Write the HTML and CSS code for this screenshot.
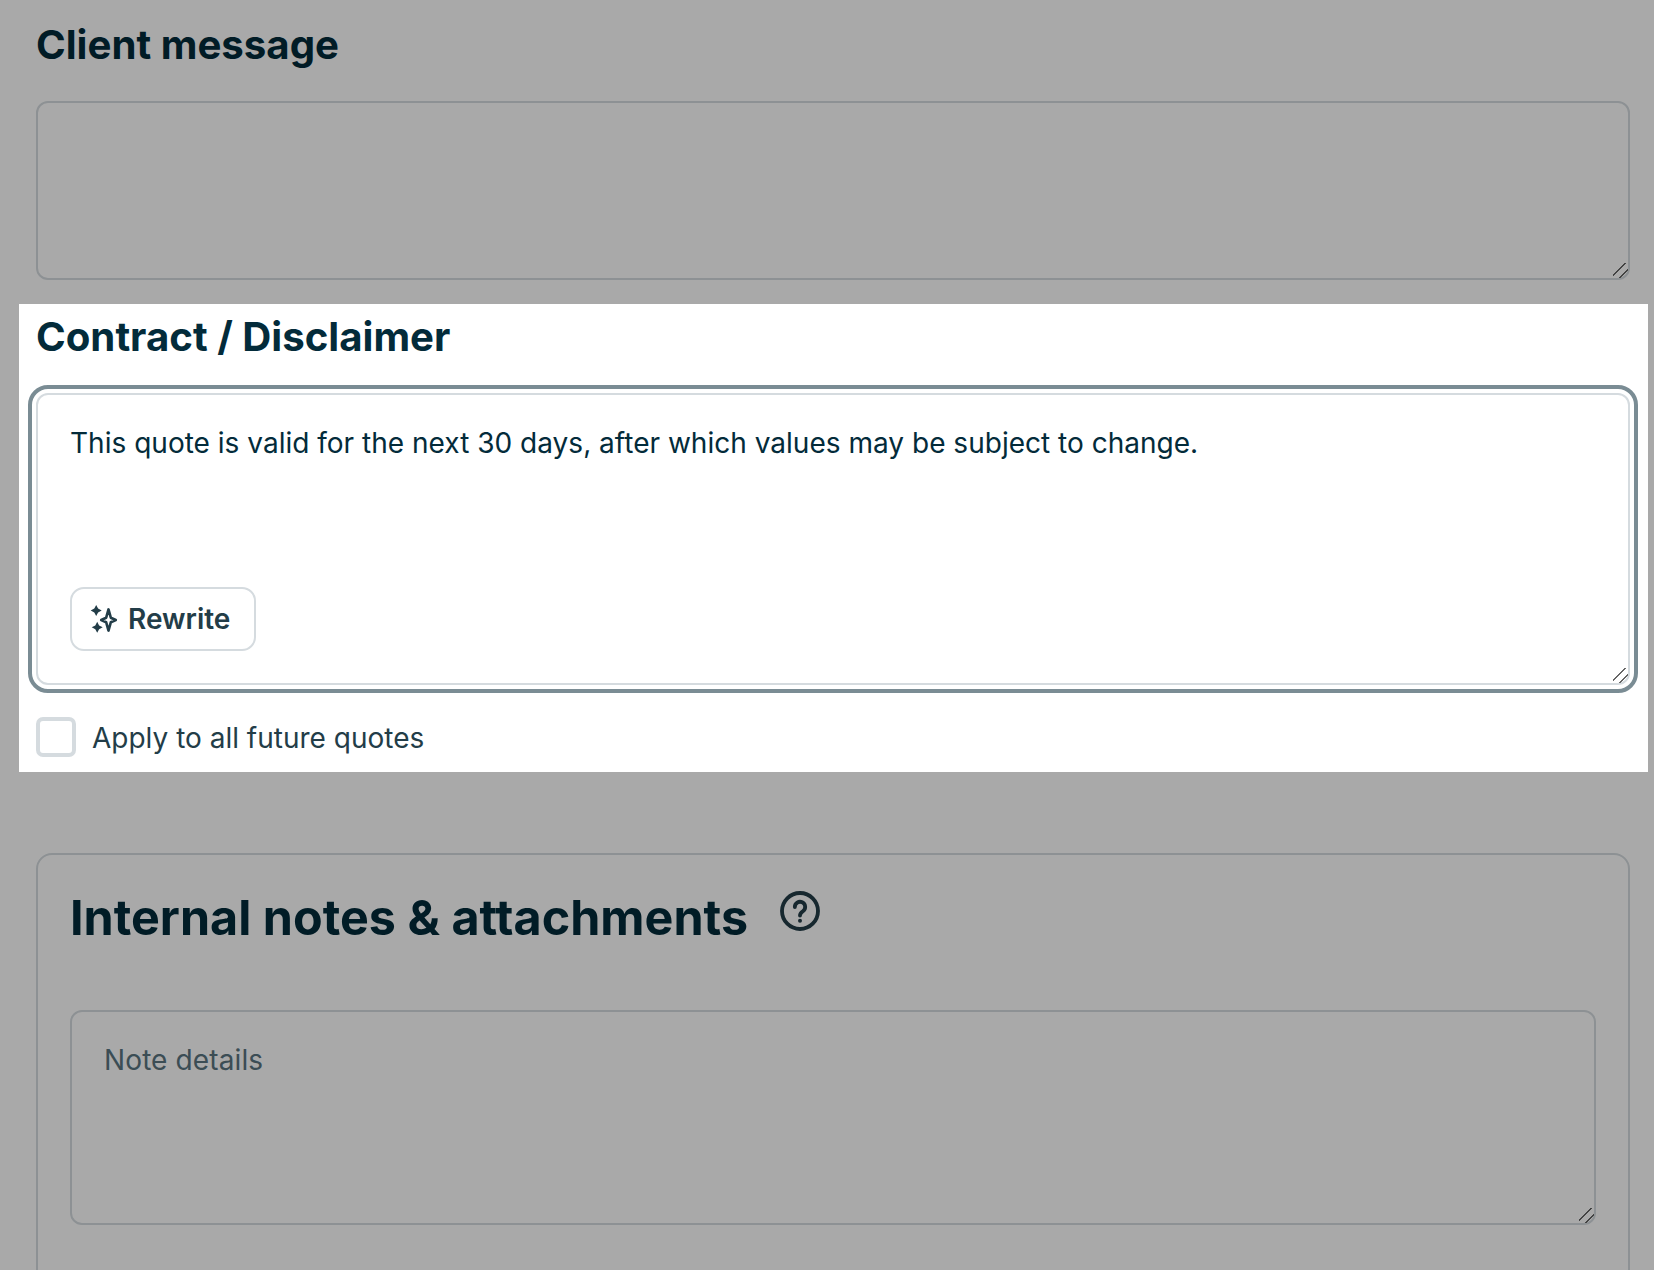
FILE: index.html
```html
<!DOCTYPE html>
<html lang="en">
<head>
    <meta charset="UTF-8">
    <meta name="viewport" content="width=device-width, initial-scale=1.0">
    <title>Quote details</title>
    <link rel="stylesheet" href="styles.css">
</head>
<body>

    <div class="overlay"></div>

    <div class="page">
        <section class="field-section">
            <h2 class="section-title">Client message</h2>
            <textarea class="text-box client-box" aria-label="Client message"></textarea>
        </section>

        <section class="field-section highlighted">
            <h2 class="section-title">Contract / Disclaimer</h2>
            <div class="contract-field">
                <textarea class="text-box contract-box" aria-label="Contract / Disclaimer">This quote is valid for the next 30 days, after which values may be subject to change.</textarea>
                <button class="rewrite-btn" type="button">
                    <svg class="rewrite-icon" viewBox="0 0 28 28" aria-hidden="true">
                        <path class="star-outline" d="M18.5 4.4 L20.8 12.7 L25.8 15 L20.8 17.3 L18.5 25.6 L16.2 17.3 L11.2 15 L16.2 12.7 Z"/>
                        <path class="star-solid" d="M6.2 0 L8.1 3.6 L11.7 5.5 L8.1 7.4 L6.2 11 L4.3 7.4 L.7 5.5 L4.3 3.6 Z"/>
                        <path class="star-solid" d="M7.2 16.8 L9.1 20.4 L12.7 22.3 L9.1 24.2 L7.2 27.8 L5.3 24.2 L1.7 22.3 L5.3 20.4 Z"/>
                    </svg>
                    Rewrite
                </button>
            </div>
            <label class="apply-row">
                <input class="apply-check" type="checkbox">
                <span class="apply-label">Apply to all future quotes</span>
            </label>
        </section>

        <section class="notes-card">
            <div class="notes-header">
                <h1 class="notes-title">Internal notes &amp; attachments</h1>
                <svg class="help-icon" viewBox="0 0 24 24" aria-hidden="true">
                    <circle cx="12" cy="12" r="10.8"/>
                    <path d="M8.9 9.6a3.1 3.1 0 1 1 5 2.4c-1.1.8-1.9 1.3-1.9 2.7"/>
                    <circle class="help-dot" cx="12" cy="17.9" r="1.2"/>
                </svg>
            </div>
            <textarea class="text-box notes-box" placeholder="Note details" aria-label="Note details"></textarea>
        </section>
    </div>

</body>
</html>
```

FILE: styles.css
```css
* {
    box-sizing: border-box;
}

html,
body {
    height: 1270px;
    margin: 0;
    overflow: hidden;
}

body {
    font-family: Inter, "Noto Sans", sans-serif;
    background-color: white;
    color: #032b3a;
}

.overlay {
    position: fixed;
    top: 0;
    right: 0;
    bottom: 0;
    left: 0;
    z-index: 1;
    background-color: rgba(0, 0, 0, 0.337);
}

.page {
    padding: 12px 24px 0 36px;
}

.field-section {
    margin-bottom: 24px;
}

.section-title {
    height: 89px;
    margin: 0;
    font-size: 40.2px;
    line-height: 66px;
    font-weight: 700;
}

.highlighted {
    position: relative;
    z-index: 2;
    margin: 0 -18px 0 -17px;
    padding: 0 18px 15px 17px;
    background-color: white;
}

.text-box {
    display: block;
    width: 100%;
    padding: 29px 32px 24px;
    border: 2px solid #d5dbdf;
    border-radius: 12px;
    background-color: white;
    color: #032b3a;
    font-family: inherit;
    font-size: 28.04px;
    line-height: 38px;
    resize: vertical;
}

.text-box::placeholder {
    color: #5a7480;
    letter-spacing: 0.1px;
    opacity: 1;
}

/* two diagonal grip lines, bigger than the default handle */
.text-box::-webkit-resizer {
    background: linear-gradient(135deg, transparent 38%, #666 38% 46%, transparent 46% 68%, #666 68% 75%, transparent 75%);
}

.client-box {
    height: 179px;
}

.contract-field {
    position: relative;
}

.contract-box {
    height: 292px;
    outline: 4px solid #7a8c94;
    outline-offset: 4px;
}

.rewrite-btn {
    position: absolute;
    left: 34px;
    bottom: 34px;
    display: flex;
    align-items: center;
    gap: 10px;
    width: 186px;
    height: 64px;
    padding: 0 0 0 18px;
    border: 2px solid #d5dbdf;
    border-radius: 14px;
    background-color: white;
    color: #233d48;
    font-family: inherit;
    font-size: 28px;
    font-weight: 600;
}

.rewrite-icon {
    width: 28px;
    height: 28px;
    flex-shrink: 0;
}

.star-outline {
    fill: none;
    stroke: #233d48;
    stroke-width: 2.6;
    stroke-linejoin: round;
}

.star-solid {
    fill: #233d48;
}

.apply-row {
    display: flex;
    align-items: center;
    gap: 16px;
    margin-top: 32px;
    color: #233d48;
    font-size: 28px;
}

.apply-check {
    appearance: none;
    width: 40px;
    height: 40px;
    margin: 0;
    border: 4px solid #d5dbdf;
    border-radius: 7px;
    background-color: white;
}

.apply-label {
    padding-top: 2px;
}

.notes-card {
    width: 1594px;
    min-height: 600px;
    margin-top: 81px;
    padding: 32px;
    border: 2px solid #d5dbdf;
    border-radius: 16px;
}

.notes-header {
    display: flex;
    align-items: flex-start;
    gap: 32px;
    height: 123px;
}

.notes-title {
    margin: 0;
    font-size: 48.45px;
    line-height: 62px;
    font-weight: 700;
}

.help-icon {
    width: 40px;
    height: 40px;
    margin-top: 4px;
    fill: none;
    stroke: #233d48;
    stroke-width: 2.3;
    stroke-linecap: round;
}

.help-dot {
    fill: #233d48;
    stroke: none;
}

.notes-box {
    height: 215px;
}
```
